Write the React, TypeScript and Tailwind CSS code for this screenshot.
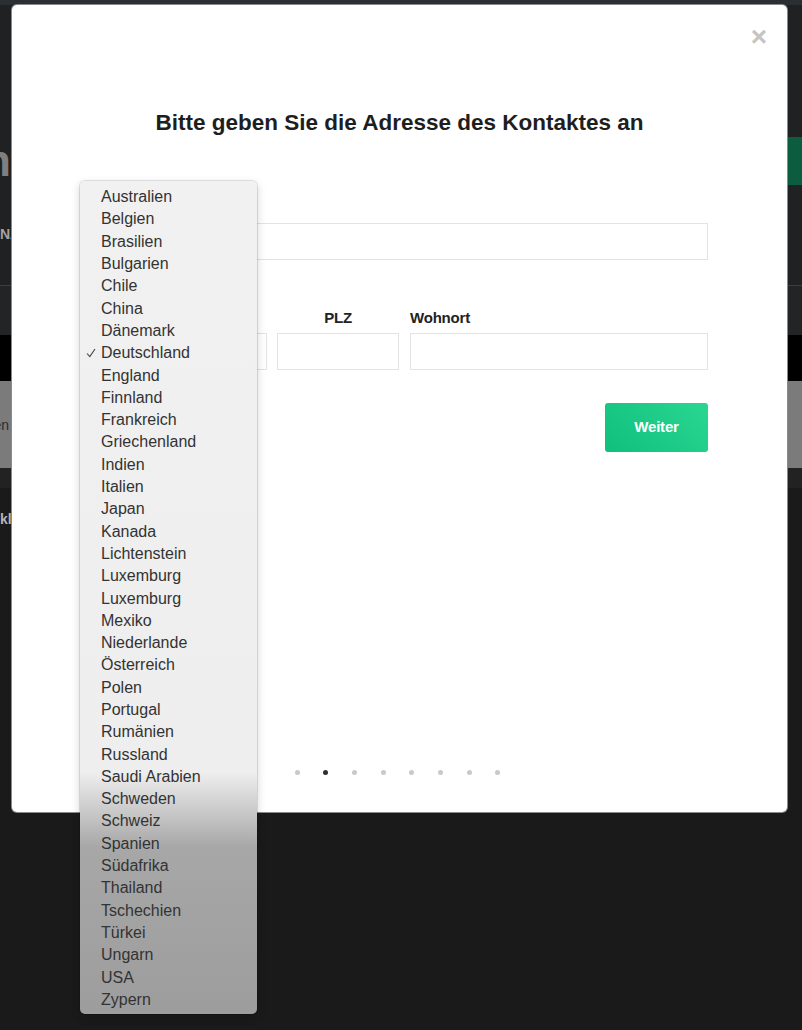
const countries = [
  'Australien',
  'Belgien',
  'Brasilien',
  'Bulgarien',
  'Chile',
  'China',
  'Dänemark',
  'Deutschland',
  'England',
  'Finnland',
  'Frankreich',
  'Griechenland',
  'Indien',
  'Italien',
  'Japan',
  'Kanada',
  'Lichtenstein',
  'Luxemburg',
  'Luxemburg',
  'Mexiko',
  'Niederlande',
  'Österreich',
  'Polen',
  'Portugal',
  'Rumänien',
  'Russland',
  'Saudi Arabien',
  'Schweden',
  'Schweiz',
  'Spanien',
  'Südafrika',
  'Thailand',
  'Tschechien',
  'Türkei',
  'Ungarn',
  'USA',
  'Zypern',
];

const selected = 'Deutschland';

export default function App() {
  return (
    <div className="relative h-[1030px] w-full overflow-hidden bg-[#1a1a1a] font-['Liberation_Sans',Arial,sans-serif]">
      {/* page behind the modal */}
      <div className="h-[5px] bg-[#2b2e33]" />
      <div className="h-[281px] border-b border-[#3d3d3d] bg-[#202122] pt-[132px]">
        <div className="flex h-[48px] items-center justify-between">
          <div className="flex w-[11px] justify-end overflow-hidden">
            <span className="whitespace-nowrap text-[44px] font-bold leading-none text-[#7f7f7f]">
              Kontakte verwalten
            </span>
          </div>
          <div className="h-full w-[140px] bg-[#0c5d3f]" />
        </div>
        <div className="mt-[41px] whitespace-nowrap text-[14px] font-bold leading-4 text-[#a3a3a3]">
          NAME
        </div>
      </div>
      <div className="h-[49px] bg-[#232425]" />
      <div className="h-[46px] bg-black" />
      <div className="flex h-[87px] items-center bg-[#7b7b7b]">
        <div className="flex w-[9px] justify-end overflow-hidden">
          <span className="whitespace-nowrap text-[14px] leading-4 text-[#2b2b2b]">Ansehen</span>
        </div>
      </div>
      <div className="h-[20px] bg-[#222222]" />
      <div className="pt-[23px] whitespace-nowrap text-[14px] font-bold leading-4 text-[#b5b5b5]">
        klicken Sie hier
      </div>

      {/* modal */}
      <div className="absolute left-[12px] top-[5px] flex h-[807px] w-[775px] flex-col rounded-[5px] bg-white shadow-[0_0_0_1px_#8a8a8a]">
        <button className="absolute right-[20px] top-[18px] text-[28px] font-bold leading-none text-[#c4c4c4]">
          ×
        </button>

        <h1 className="mt-[104px] text-center text-[22.5px] font-bold leading-7 text-[#1e1e1e]">
          Bitte geben Sie die Adresse des Kontaktes an
        </h1>

        <form className="mt-[61px] px-[79px]">
          {/* label of this row sits under the open select popup */}
          <div className="h-5" />
          <div className="mt-[5px] h-[37px] w-full border border-[#e3e3e3]" />

          <div className="mt-[48px] flex">
            <div className="mr-[10px] w-[176px]">
              <div className="h-5" />
              <div className="mt-[5px] h-[37px] w-full border border-[#e3e3e3]" />
            </div>
            <div className="mr-[11px] w-[122px]">
              <label className="block text-center text-[15px] font-bold leading-5 tracking-[-0.2px] text-[#222]">
                PLZ
              </label>
              <div className="mt-[5px] h-[37px] w-full border border-[#e3e3e3]" />
            </div>
            <div className="flex-1">
              <label className="block text-[15px] font-bold leading-5 tracking-[-0.2px] text-[#222]">
                Wohnort
              </label>
              <div className="mt-[5px] h-[37px] w-full border border-[#e3e3e3]" />
            </div>
          </div>

          <div className="mt-[33px] flex justify-end">
            <button
              type="button"
              className="h-[49px] w-[103px] rounded-[3px] bg-[linear-gradient(45deg,#0fbf7c,#2ad792)] text-[15px] font-bold tracking-[-0.2px] text-white"
            >
              Weiter
            </button>
          </div>
        </form>

        {/* step dots */}
        <div className="mb-[37px] mt-auto flex justify-center gap-[23.7px] pr-[4px]">
          {[0, 1, 2, 3, 4, 5, 6, 7].map((i) => (
            <div
              key={i}
              className={i === 1 ? 'h-[5px] w-[5px] rounded-full bg-[#2e2e2e]' : 'h-[5px] w-[5px] rounded-full bg-[#c9c9c9]'}
            />
          ))}
        </div>
      </div>

      {/* native select popup */}
      <div className="absolute left-[80px] top-[181px] w-[177px] rounded-[5px] bg-[linear-gradient(to_bottom,#f1f1f1_0%,#eeeeee_71%,#c9c9c9_75.7%,#a7a7a7_80%,#9d9d9d_100%)] pb-[3px] pt-[5px] shadow-[0_0_0_1px_rgba(0,0,0,0.1),0_3px_10px_rgba(0,0,0,0.18)]">
        {countries.map((c, i) => (
          <div key={i} className="relative flex h-[22.3px] items-center pl-[21px] text-[16px] text-[#333]">
            {c === selected && (
              <svg className="absolute left-[6px] top-[6px]" width="10" height="10" viewBox="0 0 10 10">
                <path d="M1 5.5 L3.8 8.6 L9 1" fill="none" stroke="#444" strokeWidth="1.1" />
              </svg>
            )}
            {c}
          </div>
        ))}
      </div>
    </div>
  );
}
